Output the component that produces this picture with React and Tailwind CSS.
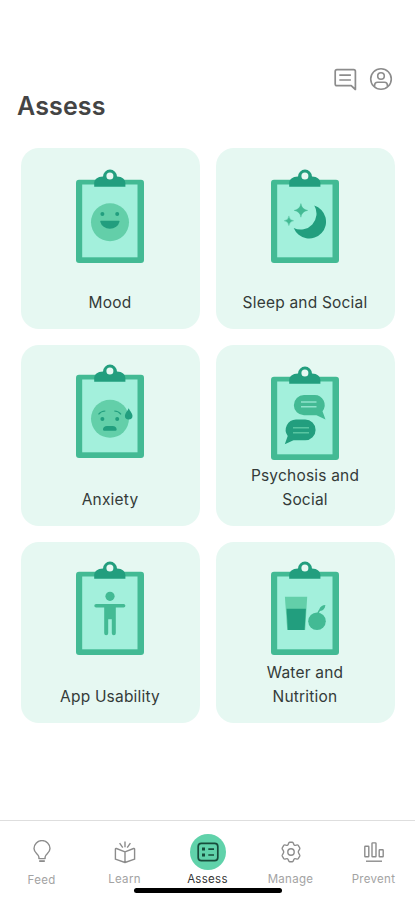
import clsx from "clsx";

function Clipboard({ children }) {
  return (
    <svg width="68" height="94" viewBox="0 0 68 94" fill="none">
      <rect y="10.7" width="68" height="83.3" rx="3" fill="#43ba94" />
      <rect x="6.2" y="15.5" width="55.3" height="72.8" fill="#a3f0dc" />
      <path
        d="M18.2 17.7V14.5C18.2 10.2 21.5 7.8 27 7.6A7 7 0 0 1 41 7.6C46.3 7.8 49.4 10.2 49.4 14.5V17.7Z"
        fill="#229e7e"
      />
      <circle cx="33.9" cy="7" r="3.5" fill="#e6f8f2" />
      {children}
    </svg>
  );
}

function MoodArt() {
  return (
    <>
      <circle cx="34" cy="53.3" r="19" fill="#63cfa9" />
      <circle cx="26.4" cy="44.9" r="2" fill="#229e7e" />
      <circle cx="41.2" cy="44.9" r="2" fill="#229e7e" />
      <path
        d="M25 51.7H42.6C43.2 51.7 43.6 52 43.5 52.7A9.8 8.7 0 0 1 24.3 52.7C24.2 52 24.5 51.7 25 51.7Z"
        fill="#229e7e"
      />
    </>
  );
}

function SleepArt() {
  return (
    <>
      <path
        d="M43.3 36.6A16.8 16.8 0 1 1 22.7 59A15.9 15.9 0 0 0 43.3 36.6Z"
        fill="#229e7e"
      />
      <path
        d="M29.9 34.6Q30.8 40.5 36.7 41.4Q30.8 42.3 29.9 48.2Q29 42.3 23.1 41.4Q29 40.5 29.9 34.6Z"
        fill="#43ba94"
        stroke="#43ba94"
        strokeWidth=".4"
      />
      <path
        d="M17.9 46.9Q18.5 51.2 22.7 51.8Q18.5 52.4 17.9 56.7Q17.3 52.4 13.1 51.8Q17.3 51.2 17.9 46.9Z"
        fill="#43ba94"
        stroke="#43ba94"
        strokeWidth=".3"
      />
    </>
  );
}

function AnxietyArt() {
  return (
    <>
      <circle cx="34" cy="54.7" r="19" fill="#63cfa9" />
      <circle cx="26.4" cy="55" r="2" fill="#229e7e" />
      <circle cx="41.2" cy="55" r="2" fill="#229e7e" />
      <path
        d="M22.5 50.3Q25 47.2 29.3 47M38.3 47Q42.6 47.2 45 50.3"
        stroke="#229e7e"
        strokeWidth="1.2"
      />
      <path
        d="M28.2 66.7Q27 66.7 27 65.5C27 63.2 28.6 62 31 62H36.6C39 62 40.6 63.2 40.6 65.5Q40.6 66.7 39.4 66.7Z"
        fill="#229e7e"
      />
      <path
        d="M52.7 44.2C53.7 46.7 56.5 49.2 56.5 51.7A3.8 3.8 0 0 1 48.9 51.7C48.9 49.2 51.7 46.7 52.7 44.2Z"
        fill="#229e7e"
      />
    </>
  );
}

function PsychosisArt() {
  return (
    <>
      <path
        d="M33 29H43.5A10 10 0 0 1 51.5 45.2L54.5 53.4L45.5 49.3H33A10.1 10.1 0 0 1 33 29Z"
        fill="#43ba94"
      />
      <path d="M30 36H45.5M30 40.7H45.5" stroke="#8fe3cb" strokeWidth="1.6" />
      <path
        d="M25 53.5H34.2A10.4 10.4 0 0 1 34.2 74.3H22.5L13.8 78.3L16.7 70A10.4 10.4 0 0 1 25 53.5Z"
        fill="#229e7e"
      />
      <path d="M22 61.8H38M22 66.7H38" stroke="#58c5a1" strokeWidth="1.6" />
    </>
  );
}

function UsabilityArt() {
  return (
    <>
      <circle cx="34" cy="35.3" r="4.6" fill="#43ba94" />
      <path
        d="M20.1 42.9H47.6A1.8 1.8 0 0 1 47.6 46.5H39.8V72.3A2 2 0 0 1 35.8 72.3V58.2H32.2V72.3A2 2 0 0 1 28.2 72.3V46.5H20.1A1.8 1.8 0 0 1 20.1 42.9Z"
        fill="#43ba94"
      />
    </>
  );
}

function WaterArt() {
  return (
    <>
      <path d="M13.9 35.7H36.2L34.2 69H16.2Z" fill="#63cfa9" />
      <path d="M15.6 47.7H34.9L33.6 68.9H16.8Z" fill="#229e7e" />
      <circle cx="46" cy="60.3" r="8.8" fill="#43ba94" />
      <path
        d="M46 53.5C46.6 51 47.2 49.8 48.2 48.6C49.2 45.3 51.3 44.2 54.4 44C54 47.6 52.3 49.6 48.9 50L47 54Z"
        fill="#43ba94"
      />
    </>
  );
}

const cards = [
  { label: "Mood", Art: MoodArt, offset: "pt-[21px]" },
  { label: "Sleep and Social", Art: SleepArt, offset: "pt-[21px]" },
  { label: "Anxiety", Art: AnxietyArt, offset: "pt-[19px]" },
  { label: "Psychosis and Social", Art: PsychosisArt, offset: "pt-[21px]" },
  { label: "App Usability", Art: UsabilityArt, offset: "pt-[19px]" },
  { label: "Water and Nutrition", Art: WaterArt, offset: "pt-[19px]" },
];

function ChatIcon() {
  return (
    <svg width="24" height="24" viewBox="0 0 24 24" fill="none" stroke="#8c8c8c" strokeWidth="1.7">
      <path d="M3.9 2.7H20.7Q22.4 2.7 22.4 4.4V22.5L18.2 18.7H3.9Q2.2 18.7 2.2 17V4.4Q2.2 2.7 3.9 2.7Z" strokeLinejoin="round" />
      <path d="M6.3 8.2H17.9M6.3 13H17.9" />
    </svg>
  );
}

function ProfileIcon() {
  return (
    <svg width="24" height="24" viewBox="0 0 24 24" fill="none" stroke="#8c8c8c" strokeWidth="1.6">
      <circle cx="12" cy="12" r="10.3" />
      <circle cx="12" cy="9" r="3.3" />
      <path d="M5.6 19.6V18.3Q5.6 15.3 8.6 15.3H15.4Q18.4 15.3 18.4 18.3V19.6" />
    </svg>
  );
}

function FeedIcon() {
  return (
    <svg width="24" height="24" viewBox="0 0 24 24" fill="none" stroke="#8c8c8c" strokeWidth="1.4">
      <path d="M8.9 18.6V17C8.6 13.9 4 13 4 8.5A8 7.9 0 0 1 20 8.5C20 13 15.4 13.9 15.1 17V18.6Z" strokeLinejoin="round" />
      <path d="M9.2 21.1H14.8" strokeWidth="1.8" />
    </svg>
  );
}

function LearnIcon() {
  return (
    <svg width="24" height="24" viewBox="0 0 24 24" fill="none" stroke="#8c8c8c" strokeWidth="1.4">
      <path d="M12 11.8L3.4 8.5Q2.4 8.2 2.4 9.2V19.2L12 22.5L21.6 19.2V9.2Q21.6 8.2 20.6 8.5ZM12 11.8V22.4" strokeLinejoin="round" />
      <path d="M12 1.4V7.2M6.6 3.2L9.8 7.6M17.4 3.2L14.2 7.6" />
    </svg>
  );
}

function AssessIcon() {
  return (
    <svg width="24" height="24" viewBox="0 0 24 24" fill="none" stroke="#174c3b" strokeWidth="1.7">
      <rect x="2.2" y="3.3" width="19.6" height="17.4" rx="3.2" />
      <path d="M12.3 9.1H18M12.3 15H18" strokeWidth="1.6" />
      <path d="M6 9.1H9M6 15H9" strokeWidth="3" />
    </svg>
  );
}

function ManageIcon() {
  return (
    <svg width="24" height="24" viewBox="0 0 24 24" fill="none" stroke="#8c8c8c" strokeWidth="1.4">
      <path
        d="M10.6 2.2H13.4C14.6 2.2 14.4 4.6 15.4 5.2C16.5 5.8 18.3 4.2 19.1 5.1L20.8 8C21.4 9.2 19.3 10.4 19.3 12C19.3 13.6 21.4 14.8 20.8 16L19.1 18.9C18.3 19.8 16.5 18.2 15.4 18.8C14.4 19.4 14.6 21.8 13.4 21.8H10.6C9.4 21.8 9.6 19.4 8.6 18.8C7.5 18.2 5.7 19.8 4.9 18.9L3.2 16C2.6 14.8 4.7 13.6 4.7 12C4.7 10.4 2.6 9.2 3.2 8L4.9 5.1C5.7 4.2 7.5 5.8 8.6 5.2C9.6 4.6 9.4 2.2 10.6 2.2Z"
        strokeLinejoin="round"
      />
      <circle cx="12" cy="12" r="3.2" />
    </svg>
  );
}

function PreventIcon() {
  return (
    <svg width="24" height="24" viewBox="0 0 24 24" fill="none" stroke="#8c8c8c" strokeWidth="1.4">
      <rect x="2.8" y="6.2" width="4" height="10.6" rx=".6" />
      <rect x="10" y="2.9" width="4" height="13.9" rx=".6" />
      <rect x="17.2" y="9.8" width="4" height="7" rx=".6" />
      <path d="M4 21.2H20" />
    </svg>
  );
}

const tabs = [
  { label: "Feed", Icon: FeedIcon, pos: "mt-[2px]" },
  { label: "Learn", Icon: LearnIcon },
  { label: "Assess", Icon: AssessIcon, active: true },
  { label: "Manage", Icon: ManageIcon },
  { label: "Prevent", Icon: PreventIcon },
];

function App() {
  return (
    <div className="flex h-[900px] w-[415px] flex-col overflow-hidden bg-white font-['Inter',sans-serif]">
      <header className="flex flex-col pt-[67px]">
        <div className="flex justify-end gap-3 pr-[22px]">
          <ChatIcon />
          <ProfileIcon />
        </div>
        <h1 className="ml-[17px] text-[25px] leading-[30px] font-semibold tracking-[0.15px] text-[#444444]">
          Assess
        </h1>
      </header>

      <main className="mt-[27px] grid grid-cols-2 gap-4 pr-[20.5px] pl-[20.5px]">
        {cards.map(({ label, Art, offset }) => (
          <div
            key={label}
            className={clsx("flex h-[181px] flex-col items-center rounded-[18px] bg-[#e6f8f2] pb-[14px]", offset)}
          >
            <Clipboard>
              <Art />
            </Clipboard>
            <p className="mt-auto w-[140px] text-center text-[15.5px] leading-6 tracking-[0.2px] text-[#343b39]">
              {label}
            </p>
          </div>
        ))}
      </main>

      <footer className="mt-auto flex h-20 flex-col border-t border-[#dedede]">
        <nav className="grid h-[65px] grid-cols-5">
          {tabs.map(({ label, Icon, active, pos = "mt-px" }) => (
            <div key={label} className="flex flex-col items-center pt-[13px]">
              <div
                className={clsx(
                  "flex size-9 items-center justify-center rounded-full",
                  active && "bg-[#60d2aa]"
                )}
              >
                <Icon />
              </div>
              <span
                className={clsx(
                  "text-[11.5px] leading-4 tracking-[0.3px]",
                  active ? "text-[#333333]" : "text-[#a3a3a3]",
                  pos
                )}
              >
                {label}
              </span>
            </div>
          ))}
        </nav>
        <div className="mt-[2px] h-[5px] w-[148px] self-center rounded-full bg-black" />
      </footer>
    </div>
  );
}

export default App;
